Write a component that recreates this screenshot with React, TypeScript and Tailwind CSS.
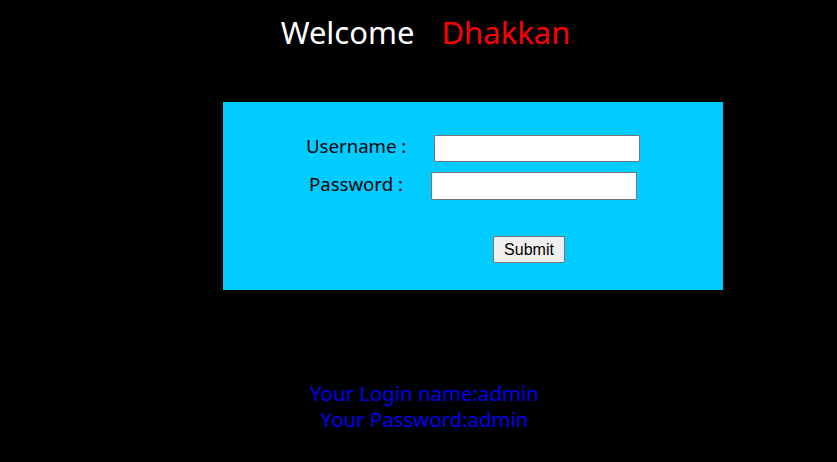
export default function App() {
  return (
    <div className="min-h-[462px] w-full bg-black text-white" style={{ fontFamily: '"Noto Sans", sans-serif' }}>
      {/* Title */}
      <div className="flex justify-center gap-[27px] pl-[14px] pt-[10px] text-[31px] leading-[44px]">
        <span className="text-white">Welcome</span>
        <span className="text-[#ff0000]">Dhakkan</span>
      </div>

      {/* Login panel */}
      <div className="ml-[223px] mt-[48px] h-[188px] w-[500px] bg-[#00ccff] text-black">
        <div className="flex flex-col pt-[33px]">
          <div className="flex items-start">
            <label className="ml-[83px] w-[128px] text-[18.6px] leading-[22px]">Username :</label>
            <input className="h-[27px] w-[206px] rounded-[2px] border border-[#767676] bg-white" />
          </div>
          <div className="mt-[10px] flex items-start">
            <label className="ml-[86px] w-[122px] text-[18.6px] leading-[23px]">Password :</label>
            <input type="password" className="h-[28px] w-[206px] rounded-[2px] border border-[#767676] bg-white" />
          </div>
          <div className="mt-[36px] flex">
            <button
              className="ml-[270px] h-[27px] w-[72px] rounded-[2px] border border-[#767676] bg-[#efefef] text-[16px] text-black"
              style={{ fontFamily: '"Liberation Sans", Arial, sans-serif' }}
            >
              Submit
            </button>
          </div>
        </div>
      </div>

      {/* Credentials hint */}
      <div className="mt-[90px] flex flex-col items-center pl-[12px] text-[20.4px] leading-[26px] text-[#0000ee]">
        <span>Your Login name:admin</span>
        <span>Your Password:admin</span>
      </div>
    </div>
  );
}
